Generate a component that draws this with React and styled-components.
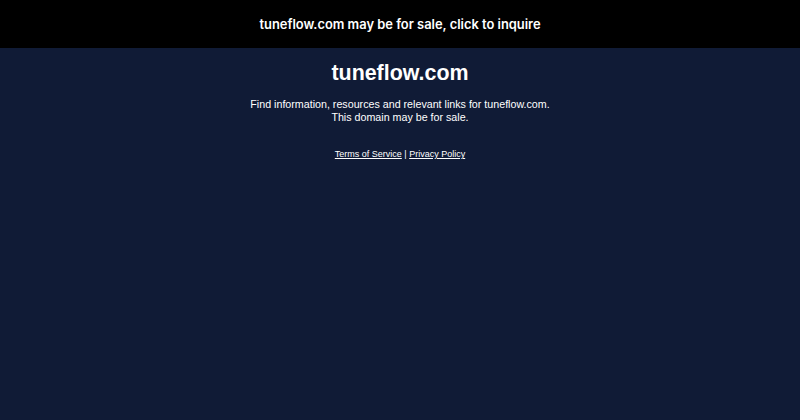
import React from 'react'
import styled, { createGlobalStyle } from 'styled-components'

const GlobalStyle = createGlobalStyle`
    html, body {
        margin: 0;
        padding: 0;
        background: #101b36;
    }
    body {
        font-family: "Liberation Sans", Arial, sans-serif;
        color: #ffffff;
    }
`

const Banner = styled.a`
    display: flex;
    align-items: center;
    justify-content: center;
    height: 48px;
    background: #000000;
    color: #ffffff;
    font-family: Inter, "Noto Sans", sans-serif;
    font-weight: 600;
    font-size: 12.9px;
    text-decoration: none;
    cursor: pointer;
`

const Main = styled.main`
    display: flex;
    flex-direction: column;
    align-items: center;
    text-align: center;
    padding-top: 12px;
`

const Title = styled.h1`
    margin: 0;
    font-size: 21.4px;
    font-weight: bold;
    line-height: 26px;
`

const Blurb = styled.p`
    margin: 12px 0 0;
    font-size: 10.7px;
    line-height: 12.5px;
`

const Footer = styled.div`
    margin-top: 26px;
    font-size: 9px;
    line-height: 11px;
`

const FooterLink = styled.a`
    color: #ffffff;
    text-decoration: underline;
`

export default function App() {
    return (
        <>
            <GlobalStyle />
            <Banner href='#'>tuneflow.com may be for sale, click to inquire</Banner>
            <Main>
                <Title>tuneflow.com</Title>
                <Blurb>
                    Find information, resources and relevant links for tuneflow.com.
                    <br />
                    This domain may be for sale.
                </Blurb>
                <Footer>
                    <FooterLink href='#'>Terms of Service</FooterLink> | <FooterLink href='#'>Privacy Policy</FooterLink>
                </Footer>
            </Main>
        </>
    )
}
